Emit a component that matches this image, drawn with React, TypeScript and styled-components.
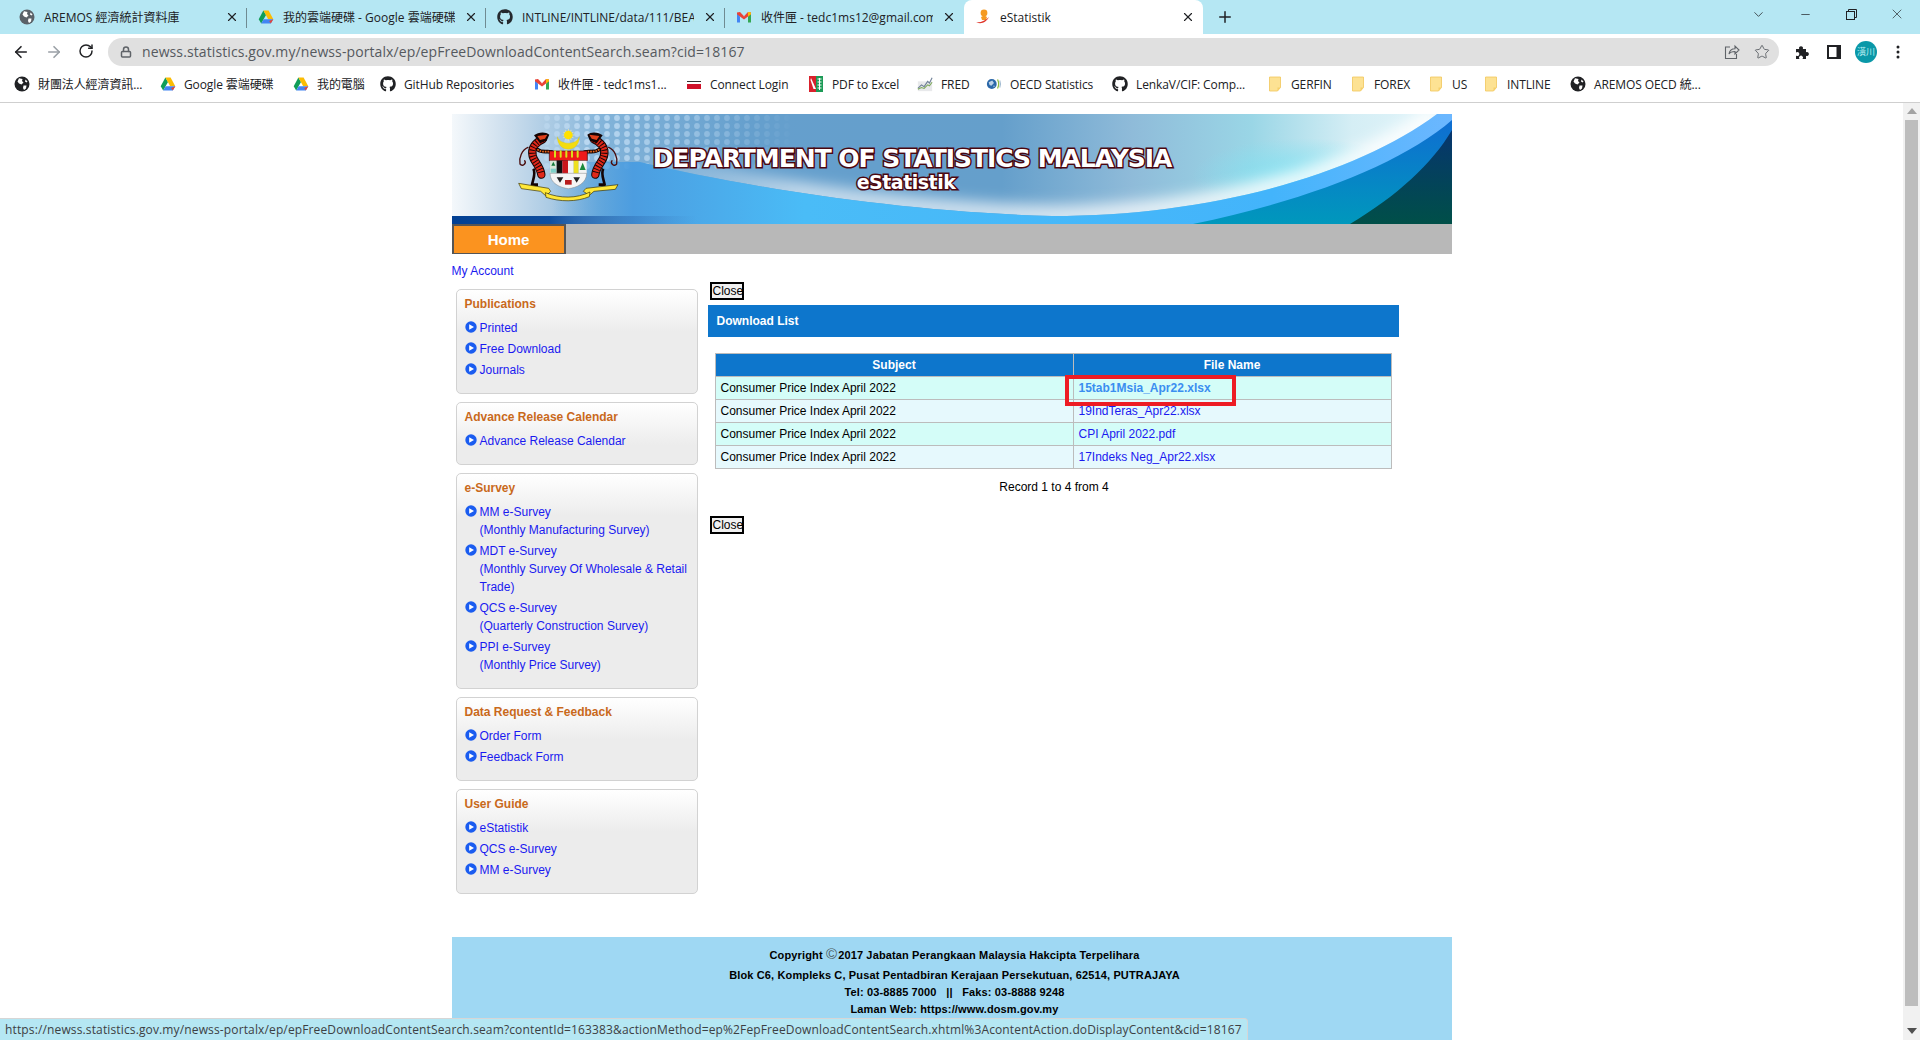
import React from "react";
import styled, { createGlobalStyle } from "styled-components";
import { ArrowLeft, ArrowRight, RotateCw, Lock, Plus, X, ChevronDown, Minus, Star } from "lucide-react";
import { FaGithub } from "react-icons/fa";

const Global = createGlobalStyle`
  html, body { margin: 0; padding: 0; height: 100%; overflow: hidden; background: #fff; }
  body { font-family: "Liberation Sans", Arial, sans-serif; }
  * { box-sizing: border-box; }
`;

const UI_FONT = `"Open Sans", "Noto Sans CJK TC", sans-serif`;

const Shell = styled.div`
  position: relative;
  width: 1920px;
  height: 1040px;
  display: flex;
  flex-direction: column;
  overflow: hidden;
`;

/* ---------- browser chrome ---------- */
const TabStrip = styled.div`
  height: 34px;
  background: #b5e7f3;
  display: flex;
  padding-left: 8px;
  flex: none;
`;
const Tab = styled.div<{ $active?: boolean; $sep?: boolean }>`
  position: relative;
  width: 239px;
  height: 34px;
  display: flex;
  align-items: center;
  gap: 9px;
  padding: 0 8px 0 11px;
  font: 12px ${UI_FONT};
  color: #202124;
  background: ${(p) => (p.$active ? "#fff" : "transparent")};
  border-radius: ${(p) => (p.$active ? "8px 8px 0 0" : "0")};
  &::after {
    content: "";
    display: ${(p) => (p.$sep ? "block" : "none")};
    position: absolute;
    right: 0;
    top: 8px;
    height: 20px;
    width: 1px;
    background: #6f8b92;
  }
`;
const TabTitle = styled.span`
  flex: 1;
  min-width: 0;
  white-space: nowrap;
  overflow: hidden;
`;
const TabClose = styled.span`
  display: flex;
  color: #202124;
  flex: none;
`;
const NewTab = styled.div`
  width: 44px;
  height: 34px;
  display: flex;
  align-items: center;
  justify-content: center;
  color: #202124;
`;
const WindowControls = styled.div`
  margin-left: auto;
  display: flex;
  align-items: center;
  height: 28px;
`;
const WinButton = styled.div<{ $w: number }>`
  width: ${(p) => p.$w}px;
  display: flex;
  justify-content: center;
  color: #202124;
`;

const Toolbar = styled.div`
  height: 34px;
  flex: none;
  display: flex;
  align-items: center;
  padding: 4px 0 2px 0;
  background: #fff;
`;
const NavButton = styled.div<{ $dim?: boolean; $w?: number }>`
  width: ${(p) => p.$w ?? 32.5}px;
  margin-top: -1px;
  display: flex;
  justify-content: center;
  color: ${(p) => (p.$dim ? "#9aa0a6" : "#202124")};
  flex: none;
`;
const NavCluster = styled.div`
  display: flex;
  padding-left: 5px;
  width: 108px;
  flex: none;
`;
const Omnibox = styled.div`
  width: 1671px;
  height: 28px;
  background: #e0e0e0;
  border-radius: 14px;
  display: flex;
  align-items: center;
  padding-left: 12px;
  flex: none;
`;
const Url = styled.span`
  margin-left: 10px;
  padding-bottom: 2px;
  font: 14px ${UI_FONT};
  letter-spacing: 0.1px;
  color: #55595e;
  white-space: nowrap;
`;
const OmniEnd = styled.div`
  margin-left: auto;
  display: flex;
  align-items: center;
  gap: 14px;
  padding-right: 9px;
  color: #5f6368;
`;
const ToolIcons = styled.div`
  display: flex;
  align-items: center;
  padding-left: 11px;
  color: #202124;
`;
const Avatar = styled.div`
  width: 22px;
  height: 22px;
  border-radius: 50%;
  background: #0a98a8;
  color: #bdeef2;
  font: 9px "Noto Sans CJK TC", sans-serif;
  display: flex;
  align-items: center;
  justify-content: center;
  margin: -1px 11px 0 1px;
`;

const Bookmarks = styled.div`
  height: 35px;
  flex: none;
  display: flex;
  align-items: center;
  padding: 0 0 2px 14px;
  background: #fff;
  border-bottom: 1px solid #cfcfcf;
`;
const Bookmark = styled.div<{ $w: number }>`
  width: ${(p) => p.$w}px;
  flex: none;
  display: flex;
  align-items: center;
  gap: 8px;
  font: 12px ${UI_FONT};
  letter-spacing: -0.1px;
  color: #202124;
  white-space: nowrap;
`;

/* ---------- page ---------- */
const Viewport = styled.div`
  flex: 1;
  min-height: 0;
  display: flex;
`;
const PageArea = styled.div`
  flex: 1;
  min-width: 0;
  padding-top: 11px;
  overflow: hidden;
`;
const Scrollbar = styled.div`
  width: 17px;
  flex: none;
  background: #f1f1f1;
  display: flex;
  flex-direction: column;
  align-items: center;
  padding-top: 5px;
`;
const ScrollThumb = styled.div`
  width: 13px;
  height: 886px;
  margin-top: 6px;
  background: #bdbdbd;
`;
const ScrollArrow = styled.div<{ $down?: boolean }>`
  width: 0;
  height: 0;
  border-left: 5px solid transparent;
  border-right: 5px solid transparent;
  ${(p) => (p.$down ? "border-top: 6px solid #505050; margin-top: 22px;" : "border-bottom: 6px solid #a3a3a3;")}
`;
const Page = styled.div`
  width: 1000px;
  margin: 0 auto;
`;
const Banner = styled.div`
  position: relative;
  height: 110px;
  overflow: hidden;
  padding: 31px 0 0 200px;
`;
const BannerArt = styled.svg`
  position: absolute;
  inset: 0;
`;
const Crest = styled.svg`
  position: absolute;
  left: 58px;
  top: 6px;
`;
const BannerTitle = styled.div`
  position: relative;
  width: 521px;
  font: bold 25px "DejaVu Sans", Verdana, sans-serif;
  letter-spacing: -1.03px;
  line-height: 27px;
  color: #fff;
  white-space: nowrap;
  -webkit-text-stroke: 3px #4a0710;
  paint-order: stroke fill;
  text-align: center;
`;
const BannerSub = styled(BannerTitle)`
  font-size: 19px;
  letter-spacing: -0.5px;
  line-height: 20px;
  padding-right: 12px;
`;
const NavBar = styled.div`
  height: 30px;
  background: #b8b8b8;
`;
const HomeTab = styled.div`
  width: 114px;
  height: 30px;
  background: #fb931f;
  border: 2px solid #555;
  border-bottom-width: 1px;
  color: #fff;
  font: bold 15px "Liberation Sans", Arial, sans-serif;
  display: flex;
  align-items: center;
  justify-content: center;
`;
const Columns = styled.div`
  display: flex;
  align-items: flex-start;
`;
const Side = styled.aside`
  width: 256px;
  flex: none;
  padding-top: 8px;
`;
const AccountLink = styled.div`
  height: 18px;
  line-height: 18px;
  font-size: 12px;
  color: #1a1af0;
  margin-bottom: 9px;
`;
const SideBox = styled.section`
  margin: 0 0 8px 4px;
  width: 242px;
  border: 1px solid #d2d2d2;
  border-radius: 5px;
  background: linear-gradient(#fff 0, #ececec 42px);
  padding: 5px 8px 11px 8px;
`;
const SideTitle = styled.h3`
  margin: 0 0 6px;
  font: bold 12px/18px "Liberation Sans", Arial, sans-serif;
  color: #c9691b;
`;
const SideList = styled.ul`
  list-style: none;
  margin: 0;
  padding: 0;
`;
const SideItem = styled.li`
  display: flex;
  gap: 3px;
  margin-bottom: 3px;
  font-size: 12px;
  line-height: 18px;
  color: #1a1af0;
  svg {
    flex: none;
    margin-top: 2px;
  }
`;
const Main = styled.main`
  width: 691px;
  margin-left: 0;
  padding-top: 28px;
`;
const CloseBtn = styled.div`
  width: 34px;
  height: 18px;
  margin-left: 2px;
  border: 2px solid #000;
  background: #f0f0f0;
  font-size: 12px;
  line-height: 14px;
  color: #000;
  padding-left: 1px;
  overflow: hidden;
`;
const ListBar = styled.div`
  height: 32px;
  margin-top: 5px;
  background: #0d76cc;
  color: #fff;
  font: bold 12px/32px "Liberation Sans", Arial, sans-serif;
  padding-left: 9px;
`;
const Table = styled.table`
  width: 676px;
  margin: 16px 0 0 7px;
  border-collapse: collapse;
  table-layout: fixed;
  font-size: 12px;
`;
const Th = styled.th`
  height: 23px;
  padding: 0 0 1px;
  background: #0d76cc;
  color: #fff;
  font-weight: bold;
  border: 1px solid #bcbcbc;
  text-align: center;
`;
const Td = styled.td<{ $odd: boolean }>`
  position: relative;
  height: 23px;
  padding: 0 0 1px 5px;
  background: ${(p) => (p.$odd ? "#d4fdf8" : "#e6f9fd")};
  border: 1px solid #bcbcbc;
  color: #000;
`;
const FileLink = styled.span<{ $hover?: boolean }>`
  color: ${(p) => (p.$hover ? "#3b8ef0" : "#1a1af0")};
  font-weight: ${(p) => (p.$hover ? "bold" : "normal")};
`;
const RedMark = styled.div`
  position: absolute;
  z-index: 2;
  left: -9px;
  top: -2px;
  width: 171px;
  height: 31px;
  border: 4px solid #ed1c24;
  pointer-events: none;
`;
const RecordLine = styled.div`
  margin-top: 9px;
  width: 691px;
  text-align: center;
  font-size: 12px;
  line-height: 18px;
  color: #000;
  padding-left: 2px;
`;
const LowerClose = styled(CloseBtn)`
  margin-top: 20px;
`;
const Footer = styled.footer`
  margin-top: 35px;
  height: 200px;
  background: #9fd8f3;
  padding: 10px 0 0 6px;
  text-align: center;
  font: bold 11px/17px "Liberation Sans", Arial, sans-serif;
  letter-spacing: 0.14px;
  color: #000;
`;
const FooterLine = styled.div<{ $gap?: number }>`
  margin-bottom: ${(p) => p.$gap ?? 0}px;
  white-space: pre;
`;
const CopyMark = styled.span`
  font-size: 15px;
  font-weight: normal;
  line-height: 10px;
  color: #4d5a60;
  margin: 0 1px 0 0;
`;
const StatusBubble = styled.div`
  position: absolute;
  left: 0;
  bottom: 0;
  width: 1248px;
  height: 22px;
  background: #b5e7f3;
  border-top: 1px solid #d6d6d6;
  border-right: 1px solid #d6d6d6;
  border-top-right-radius: 4px;
  font: 12px ${UI_FONT};
  letter-spacing: 0.136px;
  line-height: 21px;
  padding-left: 5px;
  color: #3c4043;
  white-space: nowrap;
  overflow: hidden;
`;
const TabFaviconTint = styled.span`
  color: #5a6168;
  display: flex;
`;

/* ---------- drawn icons ---------- */
const GlobeIcon = () => (
  <svg width="16" height="16" viewBox="0 0 16 16">
    <circle cx="8" cy="8" r="7.5" fill="currentColor" />
    <path d="M5 2.2 8.5 3 8 5 9.5 6.5 7.5 8.5 5 7.5 3.5 5.5ZM9.5 9.5 12.5 9.5 12 12.5 10 14 9 12ZM11.5 3.5 13.5 5.5 12.500 6.500 11 5.500Z" fill="#fff" />
  </svg>
);
const DriveIcon = () => (
  <svg width="16" height="16" viewBox="0 0 16 16">
    <path d="M5.4 1.500 .7 10.300 3.200 14.500 8 6Z" fill="#0f9d58" />
    <path d="M5.4 1.500h5.200L15.300 10.300H10.200Z" fill="#fbbc04" />
    <path d="M3.200 14.500 5.700 10.300H15.300L12.800 14.500Z" fill="#4285f4" />
    <path d="M15.300 10.300 12.800 14.500 11.200 12Z" fill="#ea4335" />
  </svg>
);
const GmailIcon = () => (
  <svg width="16" height="16" viewBox="0 0 16 16">
    <path d="M1 3.4v10h3V7.5Z" fill="#4285f4" />
    <path d="M12 7.5v5.9h3v-10Z" fill="#34a853" />
    <path d="M1 3.4 4 3 8 7.2 8 10.4 1 5.2Z" fill="#ea4335" />
    <path d="M15 3.4 12 3 8 7.2 8 10.4 15 5.2Z" fill="#ea4335" />
    <path d="M12 3l3 .4v1.8L12 7.5Z" fill="#fbbc04" />
  </svg>
);
const ConnectIcon = () => (
  <svg width="16" height="16" viewBox="0 0 16 16">
    <rect x="1" y="5" width="14" height="1" fill="#333" />
    <rect x="1" y="6" width="14" height="2" fill="#fff" />
    <rect x="1" y="8" width="14" height="5" fill="#d0122a" />
  </svg>
);
const PdfIcon = () => (
  <svg width="16" height="16" viewBox="0 0 16 16">
    <rect x="1" y="0" width="7" height="16" fill="#d9212c" />
    <rect x="8" y="0" width="7" height="16" fill="#1c9a56" />
    <path d="M3 2 8 13H5.5L2.5 4Z" fill="#fff" />
    <path d="M9.5 3h4M9.5 6h4M9.5 9h4M9.5 12h4M11.5 2v12" stroke="#fff" strokeWidth="1" />
  </svg>
);
const FredIcon = () => (
  <svg width="16" height="16" viewBox="0 0 18 16">
    <path d="M1 5h16v11H1Z" fill="#e2e4e6" opacity=".8" />
    <path d="M1 13 5 9 8 11 12 5 14 7 17 1" stroke="#6d7f96" strokeWidth="1.2" fill="none" />
    <path d="M1 14 5 12 8 13 12 9 14 10 17 6" stroke="#7da85a" strokeWidth="1.2" fill="none" />
  </svg>
);
const OecdIcon = () => (
  <svg width="16" height="16" viewBox="0 0 18 16">
    <circle cx="6.5" cy="8" r="5.5" fill="#2a67a8" />
    <path d="M3 6 7 4 9 7 6 10 4 9ZM8 10l2 0-1 2Z" fill="#bcd2e8" />
    <path d="M13 3c1.500 3 1.500 7 0 10" stroke="#8dbb3f" strokeWidth="1.4" fill="none" />
    <path d="M15.500 4c1 2.500 1 5.500 0 8" stroke="#9fb9d0" strokeWidth="1.2" fill="none" />
  </svg>
);
const FolderIcon = () => (
  <svg width="16" height="16" viewBox="0 0 16 16">
    <path d="M2.500 1h11v10.500L10.500 15h-8Z" fill="#fde293" stroke="#f1c65a" strokeWidth=".8" />
    <path d="M13.500 11.500h-3V15" fill="#f6cf6a" />
  </svg>
);
const StatIcon = () => (
  <svg width="16" height="16" viewBox="0 0 16 16">
    <circle cx="9" cy="4" r="3.400" fill="#f59a23" />
    <path d="M6 8c1.500-1.500 5-1.500 6 0l-1 3H7Z" fill="#f59a23" />
    <path d="M1 13c4 1 9-1 13-5-2.500 5-8 8-13 5Z" fill="#e0362a" />
  </svg>
);
const ShareIcon = () => (
  <svg width="16" height="16" viewBox="0 0 16 16" fill="none" stroke="currentColor" strokeWidth="1.1">
    <path d="M6 3H1.500v11.500h11V10" />
    <path d="M5 10c.5-3.500 3-5.200 6-5.200V2l4 4-4 4V7.500c-2.500 0-4.700.5-6 2.500Z" />
  </svg>
);
const PuzzleIcon = () => (
  <svg width="16" height="16" viewBox="0 0 16 16" fill="currentColor">
    <path d="M2 5h3.200a2 2 0 1 1 3.600 0H12v3.200a2 2 0 1 1 0 3.600V15H8.500a2 2 0 1 0-3 0H2v-3.500a2 2 0 1 0 0-3Z" />
  </svg>
);
const SidePanelIcon = () => (
  <svg width="14" height="14" viewBox="0 0 14 14">
    <rect width="14" height="14" fill="currentColor" />
    <rect x="2" y="2" width="7.500" height="10" fill="#fff" />
  </svg>
);
const MenuDots = () => (
  <svg width="4" height="14" viewBox="0 0 4 14" fill="currentColor">
    <circle cx="2" cy="2" r="1.500" /><circle cx="2" cy="7" r="1.500" /><circle cx="2" cy="12" r="1.500" />
  </svg>
);
const RestoreIcon = () => (
  <svg width="11" height="11" viewBox="0 0 11 11" fill="none" stroke="currentColor" strokeWidth="1">
    <rect x=".5" y="2.500" width="8" height="8" />
    <path d="M2.500 2.500V.5h8v8H8.500" />
  </svg>
);
const Bullet = () => (
  <svg width="12" height="12" viewBox="0 0 12 12">
    <circle cx="6" cy="6" r="5.700" fill="#1a5cf0" />
    <path d="M4.200 3.300 9 6 4.200 8.700Z" fill="#fff" />
  </svg>
);

/* ---------- data ---------- */
const tabs = [
  { icon: <TabFaviconTint><GlobeIcon /></TabFaviconTint>, title: "AREMOS 經濟統計資料庫", sep: true },
  { icon: <DriveIcon />, title: "我的雲端硬碟 - Google 雲端硬碟", sep: true },
  { icon: <FaGithub size={16} color="#24292e" />, title: "INTLINE/INTLINE/data/111/BEA/CPI", sep: true },
  { icon: <GmailIcon />, title: "收件匣 - tedc1ms12@gmail.com", sep: false },
];

const bookmarks: { w: number; icon: React.ReactNode; label: string }[] = [
  { w: 146, icon: <GlobeIcon />, label: "財團法人經濟資訊..." },
  { w: 133, icon: <DriveIcon />, label: "Google 雲端硬碟" },
  { w: 87, icon: <DriveIcon />, label: "我的電腦" },
  { w: 154, icon: <FaGithub size={16} color="#202124" />, label: "GitHub Repositories" },
  { w: 152, icon: <GmailIcon />, label: "收件匣 - tedc1ms1..." },
  { w: 122, icon: <ConnectIcon />, label: "Connect Login" },
  { w: 109, icon: <PdfIcon />, label: "PDF to Excel" },
  { w: 69, icon: <FredIcon />, label: "FRED" },
  { w: 126, icon: <OecdIcon />, label: "OECD Statistics" },
  { w: 155, icon: <FaGithub size={16} color="#202124" />, label: "LenkaV/CIF: Comp..." },
  { w: 83, icon: <FolderIcon />, label: "GERFIN" },
  { w: 78, icon: <FolderIcon />, label: "FOREX" },
  { w: 55, icon: <FolderIcon />, label: "US" },
  { w: 87, icon: <FolderIcon />, label: "INTLINE" },
  { w: 140, icon: <GlobeIcon />, label: "AREMOS OECD 統..." },
];

const sideMenus: { title: string; items: string[][] }[] = [
  { title: "Publications", items: [["Printed"], ["Free Download"], ["Journals"]] },
  { title: "Advance Release Calendar", items: [["Advance Release Calendar"]] },
  {
    title: "e-Survey",
    items: [
      ["MM e-Survey", "(Monthly Manufacturing Survey)"],
      ["MDT e-Survey", "(Monthly Survey Of Wholesale & Retail", "Trade)"],
      ["QCS e-Survey", "(Quarterly Construction Survey)"],
      ["PPI e-Survey", "(Monthly Price Survey)"],
    ],
  },
  { title: "Data Request & Feedback", items: [["Order Form"], ["Feedback Form"]] },
  { title: "User Guide", items: [["eStatistik"], ["QCS e-Survey"], ["MM e-Survey"]] },
];

const files = ["15tab1Msia_Apr22.xlsx", "19IndTeras_Apr22.xlsx", "CPI April 2022.pdf", "17Indeks Neg_Apr22.xlsx"];

/* ---------- banner drawings ---------- */
const CURVE = "M188 48C280 70 440 98 600 102 760 102 905 60 985 0";

const BannerBackdrop = () => (
  <BannerArt width="1000" height="110" viewBox="0 0 1000 110">
    <defs>
      <linearGradient id="base" x1="0" x2="1" y1="0" y2="0">
        <stop offset="0" stopColor="#f4f8fb" />
        <stop offset=".06" stopColor="#c9dcec" />
        <stop offset=".15" stopColor="#82b3d9" />
        <stop offset=".3" stopColor="#659fcd" />
        <stop offset=".55" stopColor="#659fcb" />
        <stop offset=".68" stopColor="#8fbbd9" />
        <stop offset=".8" stopColor="#9ad6e6" />
        <stop offset=".9" stopColor="#d5eef5" />
        <stop offset="1" stopColor="#e4f6fb" />
      </linearGradient>
      <radialGradient id="cyan" cx=".5" cy=".5" r=".5">
        <stop offset="0" stopColor="#7fe2f2" stopOpacity=".9" />
        <stop offset="1" stopColor="#7fe2f2" stopOpacity="0" />
      </radialGradient>
      <linearGradient id="band" x1="0" x2="1" y1="0" y2="0">
        <stop offset="0" stopColor="#4a9ede" stopOpacity="0" />
        <stop offset=".09" stopColor="#4c9de0" />
        <stop offset=".28" stopColor="#4abcf7" />
        <stop offset=".8" stopColor="#43b4fb" />
        <stop offset="1" stopColor="#6cb7ff" />
      </linearGradient>
      <linearGradient id="deep" x1="0" x2="0" y1="0" y2="1">
        <stop offset="0" stopColor="#0f6dd2" />
        <stop offset="1" stopColor="#0098bc" />
      </linearGradient>
      <linearGradient id="dark" x1="0" x2="0" y1="0" y2="1">
        <stop offset="0" stopColor="#07356f" />
        <stop offset="1" stopColor="#004f48" />
      </linearGradient>
      <linearGradient id="navyFade" x1="0" x2="1" y1="0" y2="0">
        <stop offset="0" stopColor="#013f92" />
        <stop offset=".4" stopColor="#0f4e9e" />
        <stop offset="1" stopColor="#3f7fc0" stopOpacity="0" />
      </linearGradient>
      <linearGradient id="sheenFade" x1="188" x2="985" y1="0" y2="0" gradientUnits="userSpaceOnUse">
        <stop offset="0" stopColor="#fff" stopOpacity="0" />
        <stop offset=".2" stopColor="#fff" stopOpacity=".6" />
        <stop offset="1" stopColor="#fff" stopOpacity=".85" />
      </linearGradient>
      <pattern id="dots" width="10" height="8" patternUnits="userSpaceOnUse">
        <circle cx="5" cy="4" r="2.900" fill="#cfe6fa" />
      </pattern>
      <linearGradient id="dotFade" x1="88" x2="345" y1="0" y2="0" gradientUnits="userSpaceOnUse">
        <stop offset="0" stopColor="#fff" stopOpacity=".3" />
        <stop offset=".2" stopColor="#fff" stopOpacity=".7" />
        <stop offset=".6" stopColor="#fff" stopOpacity=".4" />
        <stop offset="1" stopColor="#fff" stopOpacity="0" />
      </linearGradient>
      <mask id="dotMask">
        <rect x="88" y="0" width="258" height="56" fill="url(#dotFade)" />
      </mask>
      <filter id="soft" x="-10%" y="-80%" width="120%" height="260%"><feGaussianBlur stdDeviation="7" /></filter>
      <clipPath id="above">
        <path d="M188 48C280 70 440 98 600 102 760 102 905 60 985 0H100V48Z" />
      </clipPath>
    </defs>
    <rect width="1000" height="110" fill="url(#base)" />
    <ellipse cx="850" cy="62" rx="110" ry="38" fill="url(#cyan)" />
    <rect x="88" y="0" width="258" height="56" fill="url(#dots)" mask="url(#dotMask)" />
    <g clipPath="url(#above)">
      <path d={CURVE} fill="none" stroke="url(#sheenFade)" strokeWidth="22" filter="url(#soft)" />
    </g>
    <path d="M100 48H188C280 70 440 98 600 102 760 102 905 60 985 0H1000V110H100Z" fill="url(#band)" />
    <path d="M741 110C850 88 950 50 1000 6V110Z" fill="url(#deep)" />
    <path d="M898 110C945 82 980 50 1000 16V110Z" fill="url(#dark)" />
    <rect y="102" width="245" height="8" fill="url(#navyFade)" />
  </BannerArt>
);

const TIGER_BODY = "M98 58C78 66 62 84 68 108 72 126 90 136 94 164";

const Tiger = () => (
  <g>
    <path d="M54 82C36 90 26 112 30 132 38 142 50 130 44 122" fill="none" stroke="#4a0d0d" strokeWidth="4" strokeLinecap="round" />
    <path d={TIGER_BODY} fill="none" stroke="#140404" strokeWidth="25" strokeLinecap="round" />
    <path d={TIGER_BODY} fill="none" stroke="#e0281a" strokeWidth="19" strokeLinecap="round" />
    <path d={TIGER_BODY} fill="none" stroke="#140404" strokeWidth="19" strokeDasharray="3 6" />
    <path d="M82 88C96 100 110 92 126 96" fill="none" stroke="#140404" strokeWidth="11" strokeLinecap="round" />
    <path d="M82 88C96 100 110 92 126 96" fill="none" stroke="#ef6a1c" strokeWidth="5" strokeDasharray="5 3" />
    <path d="M72 46C84 36 106 34 118 44L110 62 90 70Z" fill="#140404" />
    <path d="M82 48 112 44 105 56 90 60Z" fill="#e0401a" />
    <path d="M70 146C78 158 70 176 66 194H84" fill="none" stroke="#140404" strokeWidth="8" strokeLinejoin="round" />
  </g>
);

const CrestDrawing = () => (
  <Crest width="120" height="90" viewBox="0 0 360 270">
    <g fill="#f8e9a0">
      {[0, 30, 60, 90, 120, 150, 180, 210, 240, 270, 300, 330].map((a) => (
        <rect key={a} x="174" y="27" width="2" height="7" transform={`rotate(${a} 175 45)`} />
      ))}
    </g>
    <circle cx="175" cy="45" r="13" fill="#ffe100" />
    <path d="M142 50C142 100 208 100 208 50 200 76 150 76 142 50Z" fill="#f3dc10" stroke="#d8c31a" strokeWidth="1" />
    <Tiger />
    <g transform="translate(350 0) scale(-1 1)"><Tiger /></g>
    <path d="M118 93H232V122H118Z" fill="#ee1a1a" stroke="#3a0808" strokeWidth="2" />
    <path d="M135 94v16M152 94v16M169 94v16M186 94v16M203 94v16" stroke="#d9e01a" strokeWidth="6" strokeLinecap="round" />
    <path d="M120 122H140V160H120Z" fill="#d8e8d8" />
    <path d="M130 125l6 12H124Z" fill="#157a3a" />
    <path d="M122 146H138V158H122Z" fill="#7fd0c8" />
    <rect x="140" y="122" width="17" height="42" fill="#111" />
    <rect x="157" y="122" width="17" height="42" fill="#c9171c" />
    <rect x="174" y="122" width="17" height="42" fill="#f4f4f4" />
    <rect x="191" y="122" width="15" height="42" fill="#efe01f" />
    <path d="M206 122H230V160L206 164Z" fill="#f3f3f3" />
    <path d="M218 128l9 22H209Z" fill="#1a8a3c" />
    <path d="M120 160H230C230 190 200 203 175 206 150 203 120 190 120 160Z" fill="#f5f5f5" stroke="#888" strokeWidth="1.500" />
    <path d="M140 172h20l-10 16ZM190 172h20l-10 16Z" fill="#222" />
    <path d="M165 180h20v14h-20Z" fill="#b81c1c" />
    <g fill="#ffe838" stroke="#3a3000" strokeWidth="2" strokeLinejoin="round">
      <path d="M26 190 116 205 122 214 108 228 92 214 34 206Z" />
      <path d="M324 194 228 205 220 214 238 226 252 214 316 208Z" />
      <path d="M106 218C150 236 200 236 240 216L238 230C200 246 150 246 108 232Z" />
    </g>
  </Crest>
);

const App = () => (
  <Shell>
    <Global />
    <TabStrip>
      {tabs.map((t) => (
        <Tab key={t.title} $sep={t.sep}>
          {t.icon}
          <TabTitle>{t.title}</TabTitle>
          <TabClose><X size={14} strokeWidth={2} /></TabClose>
        </Tab>
      ))}
      <Tab $active>
        <StatIcon />
        <TabTitle>eStatistik</TabTitle>
        <TabClose><X size={14} strokeWidth={2} /></TabClose>
      </Tab>
      <NewTab><Plus size={18} strokeWidth={2} /></NewTab>
      <WindowControls>
        <WinButton $w={48}><ChevronDown size={15} strokeWidth={1.2} /></WinButton>
        <WinButton $w={46}><Minus size={13} strokeWidth={1.3} /></WinButton>
        <WinButton $w={46}><RestoreIcon /></WinButton>
        <WinButton $w={46}><X size={16} strokeWidth={1} /></WinButton>
      </WindowControls>
    </TabStrip>
    <Toolbar>
      <NavCluster>
        <NavButton><ArrowLeft size={18} strokeWidth={2.2} /></NavButton>
        <NavButton $dim><ArrowRight size={18} strokeWidth={2.2} /></NavButton>
        <NavButton><RotateCw size={16} strokeWidth={2.2} /></NavButton>
      </NavCluster>
      <Omnibox>
        <Lock size={12} strokeWidth={3} color="#5f6368" />
        <Url>newss.statistics.gov.my/newss-portalx/ep/epFreeDownloadContentSearch.seam?cid=18167</Url>
        <OmniEnd>
          <ShareIcon />
          <Star size={16} strokeWidth={1.4} />
        </OmniEnd>
      </Omnibox>
      <ToolIcons>
        <NavButton $w={24}><PuzzleIcon /></NavButton>
        <NavButton $w={40}><SidePanelIcon /></NavButton>
        <Avatar>潢川</Avatar>
        <NavButton $w={20}><MenuDots /></NavButton>
      </ToolIcons>
    </Toolbar>
    <Bookmarks>
      {bookmarks.map((b) => (
        <Bookmark key={b.label + b.w} $w={b.w}>
          {b.icon}
          <span>{b.label}</span>
        </Bookmark>
      ))}
    </Bookmarks>
    <Viewport>
      <PageArea>
        <Page>
          <Banner>
            <BannerBackdrop />
            <CrestDrawing />
            <BannerTitle>DEPARTMENT OF STATISTICS MALAYSIA</BannerTitle>
            <BannerSub>eStatistik</BannerSub>
          </Banner>
          <NavBar><HomeTab>Home</HomeTab></NavBar>
          <Columns>
            <Side>
              <AccountLink>My Account</AccountLink>
              {sideMenus.map((m) => (
                <SideBox key={m.title}>
                  <SideTitle>{m.title}</SideTitle>
                  <SideList>
                    {m.items.map((lines) => (
                      <SideItem key={lines[0]}>
                        <Bullet />
                        <span>
                          {lines.map((l, i) => (
                            <React.Fragment key={l}>
                              {i > 0 && <br />}
                              {l}
                            </React.Fragment>
                          ))}
                        </span>
                      </SideItem>
                    ))}
                  </SideList>
                </SideBox>
              ))}
            </Side>
            <Main>
              <CloseBtn>Close</CloseBtn>
              <ListBar>Download List</ListBar>
              <Table>
                <colgroup>
                  <col style={{ width: 358 }} />
                  <col style={{ width: 318 }} />
                </colgroup>
                <thead>
                  <tr><Th>Subject</Th><Th>File Name</Th></tr>
                </thead>
                <tbody>
                  {files.map((f, i) => (
                    <tr key={f}>
                      <Td $odd={i % 2 === 0}>Consumer Price Index April 2022</Td>
                      <Td $odd={i % 2 === 0}>
                        <FileLink $hover={i === 0}>{f}</FileLink>
                        {i === 0 && <RedMark />}
                      </Td>
                    </tr>
                  ))}
                </tbody>
              </Table>
              <RecordLine>Record 1 to 4 from 4</RecordLine>
              <LowerClose>Close</LowerClose>
            </Main>
          </Columns>
          <Footer>
            <FooterLine $gap={3}>Copyright <CopyMark>©</CopyMark>2017 Jabatan Perangkaan Malaysia Hakcipta Terpelihara</FooterLine>
            <FooterLine>Blok C6, Kompleks C, Pusat Pentadbiran Kerajaan Persekutuan, 62514, PUTRAJAYA</FooterLine>
            <FooterLine>Tel: 03-8885 7000   ||   Faks: 03-8888 9248</FooterLine>
            <FooterLine>Laman Web: https://www.dosm.gov.my</FooterLine>
          </Footer>
        </Page>
      </PageArea>
      <Scrollbar>
        <ScrollArrow />
        <ScrollThumb />
        <ScrollArrow $down />
      </Scrollbar>
    </Viewport>
    <StatusBubble>https://newss.statistics.gov.my/newss-portalx/ep/epFreeDownloadContentSearch.seam?contentId=163383&amp;actionMethod=ep%2FepFreeDownloadContentSearch.xhtml%3AcontentAction.doDisplayContent&amp;cid=18167</StatusBubble>
  </Shell>
);

export default App;
